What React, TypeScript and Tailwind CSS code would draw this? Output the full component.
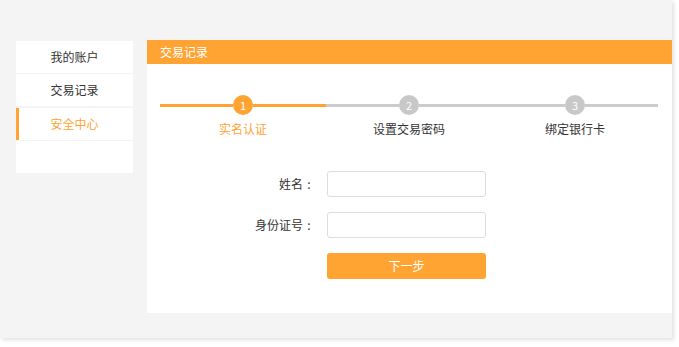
import React from "react";

const ORANGE = "bg-[#ffa333]";

function Step({ n, label, active }: { n: number; label: string; active: boolean }) {
  return (
    <div className="flex w-[166px] flex-col items-center">
      <div className="flex h-[20px] w-full items-center">
        <div className={`h-[3px] flex-1 ${active ? "bg-[#ffa333]" : "bg-[#cccccc]"}`} />
        <div
          className={`flex h-[20px] w-[20px] items-center justify-center rounded-full text-[11px] leading-none text-white ${
            active ? "bg-[#ffa333]" : "bg-[#c8c8c8]"
          }`}
        >
          {n}
        </div>
        <div className={`h-[3px] flex-1 ${active ? "bg-[#ffa333]" : "bg-[#cccccc]"}`} />
      </div>
      <div className={`mt-[6px] text-[12px] leading-[16px] ${active ? "text-[#ffa333]" : "text-[#333333]"}`}>
        {label}
      </div>
    </div>
  );
}

function Label({ text }: { text: string }) {
  return (
    <div className="flex w-[168px] justify-end text-[12px] text-[#333333]">
      <span>{text}</span>
      <span className="inline-block w-[12px] text-center">:</span>
    </div>
  );
}

export default function App() {
  return (
    <div
      className="h-[347px] w-[679px] bg-white"
      style={{ fontFamily: '"Noto Sans CJK SC", "Noto Sans", sans-serif' }}
    >
      <div className="flex h-[338px] w-[672px] bg-[#f4f4f4] pl-[16px] pt-[40px] shadow-[2px_2px_4px_rgba(0,0,0,0.12)]">
        <div className="mt-[1px] flex h-[132px] w-[117px] flex-col gap-[1.4px]">
          <div className="flex h-[32px] items-center justify-center bg-white text-[12px] text-[#333333]">我的账户</div>
          <div className="flex h-[32px] items-center justify-center bg-white text-[12px] text-[#333333]">交易记录</div>
          <div className="flex h-[32px] items-center justify-center border-l-[3px] border-[#ffa333] bg-white pr-[3px] text-[12px] text-[#ffa333]">
            安全中心
          </div>
          <div className="h-[32px] bg-white" />
        </div>
        <div className="ml-[14px] h-[273px] w-[525px] bg-white">
          <div className={`flex h-[24px] items-center pl-[13px] text-[12px] text-white ${ORANGE}`}>交易记录</div>
          <div className="ml-[13px] mt-[31px] flex">
            <Step n={1} label="实名认证" active />
            <Step n={2} label="设置交易密码" active={false} />
            <Step n={3} label="绑定银行卡" active={false} />
          </div>
          <div className="mt-[34px] flex flex-col gap-[15px]">
            <div className="flex items-center">
              <Label text="姓名" />
              <input className="ml-[12px] h-[26px] w-[159px] rounded-[3px] border border-[#dddddd] outline-none" />
            </div>
            <div className="flex items-center">
              <Label text="身份证号" />
              <input className="ml-[12px] h-[26px] w-[159px] rounded-[3px] border border-[#dddddd] outline-none" />
            </div>
            <div className="flex items-center">
              <div className="w-[168px]" />
              <button className={`ml-[12px] flex h-[26px] w-[159px] items-center justify-center rounded-[3px] text-[12px] text-white ${ORANGE}`}>
                下一步
              </button>
            </div>
          </div>
        </div>
      </div>
    </div>
  );
}
